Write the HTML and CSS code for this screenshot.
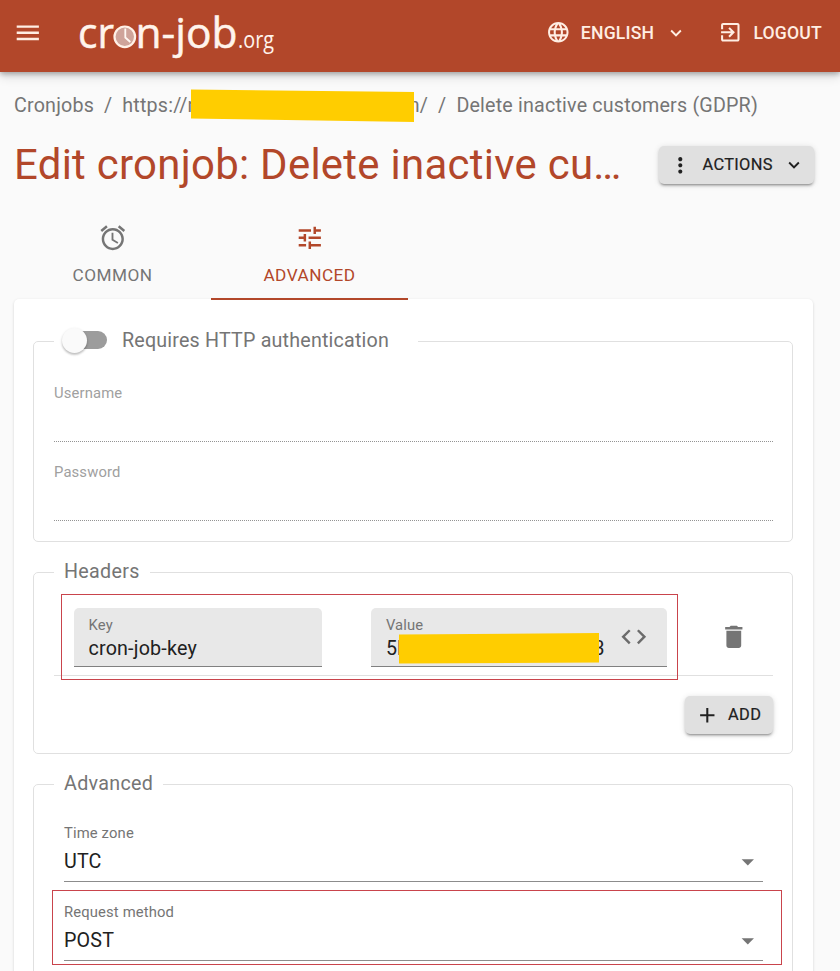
FILE: index.html
```
<!DOCTYPE html>
<html lang="en">
<head>
<meta charset="utf-8">
<title>Edit cronjob</title>
<link rel="stylesheet" href="styles.css">
</head>
<body>
<header class="appbar">
  <svg class="icon menu" viewBox="0 0 24 24"><path d="M3 18h18v-2H3v2zm0-5h18v-2H3v2zm0-7v2h18V6H3z"/></svg>
  <svg class="logo" viewBox="0 0 200 72" role="img" aria-label="cron-job.org">
    <g class="logo-text">
      <text x="1" y="47.5" textLength="36" lengthAdjust="spacingAndGlyphs">cr</text>
      <text x="58.5" y="47.5" textLength="102" lengthAdjust="spacingAndGlyphs">n-job</text>
      <text class="logo-tld" x="161" y="48" textLength="36" lengthAdjust="spacingAndGlyphs">.org</text>
    </g>
    <circle class="clock-face" cx="47.8" cy="36.8" r="10.3"/>
    <path class="clock-hands" d="M48.3 28.5v9l5 4.5"/>
  </svg>
  <div class="appbar-action language">
    <svg class="icon small" viewBox="0 0 24 24"><path d="M11.99 2C6.47 2 2 6.48 2 12s4.47 10 9.99 10C17.52 22 22 17.52 22 12S17.52 2 11.99 2zm6.93 6h-2.95c-.32-1.25-.78-2.45-1.38-3.56 1.84.63 3.37 1.91 4.33 3.56zM12 4.04c.83 1.2 1.48 2.53 1.91 3.96h-3.82c.43-1.43 1.08-2.76 1.91-3.96zM4.26 14C4.1 13.36 4 12.69 4 12s.1-1.36.26-2h3.38c-.08.66-.14 1.32-.14 2s.06 1.34.14 2H4.26zm.82 2h2.95c.32 1.25.78 2.45 1.38 3.56-1.84-.63-3.37-1.9-4.33-3.56zm2.95-8H5.08c.96-1.66 2.49-2.93 4.33-3.56C8.81 5.55 8.35 6.75 8.03 8zM12 19.96c-.83-1.2-1.48-2.53-1.91-3.96h3.82c-.43 1.43-1.08 2.76-1.91 3.96zM14.34 14H9.66c-.09-.66-.16-1.32-.16-2s.07-1.35.16-2h4.68c.09.65.16 1.32.16 2s-.07 1.34-.16 2zm.25 5.56c.6-1.11 1.06-2.31 1.38-3.56h2.95c-.96 1.65-2.49 2.93-4.33 3.56zM16.36 14c.08-.66.14-1.32.14-2s-.06-1.34-.14-2h3.38c.16.64.26 1.31.26 2s-.1 1.36-.26 2h-3.38z"/></svg>
    <span>ENGLISH</span>
    <svg class="icon caret" viewBox="0 0 24 24"><path d="M7.41 8.59 12 13.17l4.59-4.58L18 10l-6 6-6-6z"/></svg>
  </div>
  <div class="appbar-action">
    <svg class="icon small" viewBox="0 0 24 24"><path d="M10.09 15.59 11.5 17l5-5-5-5-1.41 1.41L12.67 11H3v2h9.67l-2.58 2.59zM19 3H5c-1.11 0-2 .9-2 2v4h2V5h14v14H5v-4H3v4c0 1.1.89 2 2 2h14c1.1 0 2-.9 2-2V5c0-1.1-.9-2-2-2z"/></svg>
    <span>LOGOUT</span>
  </div>
</header>

<main class="content">
  <nav class="breadcrumbs">
    <span>Cronjobs</span><span class="sep">/</span>
    <span class="url"><span>https://n</span><svg class="redaction" viewBox="0 0 223 33"><path d="M0 0.5 223 3v30L0 29.5z"/></svg><span>n/</span></span>
    <span class="sep">/</span><span>Delete inactive customers (GDPR)</span>
  </nav>

  <div class="title-row">
    <h1>Edit cronjob: Delete inactive cu…</h1>
    <button class="btn actions">
      <svg class="icon small" viewBox="0 0 24 24"><path d="M12 8c1.1 0 2-.9 2-2s-.9-2-2-2-2 .9-2 2 .9 2 2 2zm0 2c-1.1 0-2 .9-2 2s.9 2 2 2 2-.9 2-2-.9-2-2-2zm0 6c-1.1 0-2 .9-2 2s.9 2 2 2 2-.9 2-2-.9-2-2-2z"/></svg>
      <span>ACTIONS</span>
      <svg class="icon caret" viewBox="0 0 24 24"><path d="M7.41 8.59 12 13.17l4.59-4.58L18 10l-6 6-6-6z"/></svg>
    </button>
  </div>

  <div class="tabs">
    <div class="tab">
      <svg class="icon" viewBox="0 0 24 24"><path d="m22 5.72-4.6-3.86-1.29 1.53 4.6 3.86L22 5.72zM7.88 3.39 6.6 1.86 2 5.71l1.29 1.53 4.59-3.85zM12.5 8H11v6l4.75 2.85.75-1.23-4-2.37V8zM12 4c-4.97 0-9 4.03-9 9s4.02 9 9 9c4.97 0 9-4.03 9-9s-4.03-9-9-9zm0 16c-3.87 0-7-3.13-7-7s3.13-7 7-7 7 3.13 7 7-3.13 7-7 7z"/></svg>
      <span>COMMON</span>
    </div>
    <div class="tab selected">
      <svg class="icon" viewBox="0 0 24 24"><path d="M3 17v2h6v-2H3zM3 5v2h10V5H3zm10 16v-2h8v-2h-8v-2h-2v6h2zM7 9v2H3v2h4v2h2V9H7zm14 4v-2H11v2h10zm-6-4h2V7h4V5h-4V3h-2v6z"/></svg>
      <span>ADVANCED</span>
    </div>
  </div>

  <section class="card">
    <fieldset class="auth">
      <legend><span class="switch"><span class="thumb"></span></span>Requires HTTP authentication</legend>
      <div class="field disabled"><label>Username</label></div>
      <div class="field disabled"><label>Password</label></div>
    </fieldset>

    <fieldset class="headers">
      <legend>Headers</legend>
      <div class="header-row">
        <div class="filled key"><label>Key</label><span class="value">cron-job-key</span></div>
        <div class="filled val">
          <div><label>Value</label>
            <span class="value secret"><span>5b</span><svg class="redaction" viewBox="0 0 200 31"><path d="M0 1.5 200 0v29.5L0 30.5z"/></svg><span>3</span></span>
          </div>
          <svg class="icon code" viewBox="0 0 24 24"><path d="M9.4 16.6 4.8 12l4.6-4.6L8 6l-6 6 6 6 1.4-1.4zm5.2 0 4.6-4.6-4.6-4.6L16 6l6 6-6 6-1.4-1.4z"/></svg>
        </div>
        <svg class="icon trash" viewBox="0 0 24 24"><path d="M6 19c0 1.1.9 2 2 2h8c1.1 0 2-.9 2-2V7H6v12zM19 4h-3.5l-1-1h-5l-1 1H5v2h14V4z"/></svg>
        <div class="highlight row-highlight"></div>
      </div>
      <button class="btn add">
        <svg class="icon small" viewBox="0 0 24 24"><path d="M19 13h-6v6h-2v-6H5v-2h6V5h2v6h6v2z"/></svg>
        <span>ADD</span>
      </button>
    </fieldset>

    <fieldset class="advanced">
      <legend>Advanced</legend>
      <div class="field">
        <label>Time zone</label>
        <div class="select"><span>UTC</span><svg class="icon" viewBox="0 0 24 24"><path d="m7 10 5 5 5-5z"/></svg></div>
      </div>
      <div class="field">
        <label>Request method</label>
        <div class="select"><span>POST</span><svg class="icon" viewBox="0 0 24 24"><path d="m7 10 5 5 5-5z"/></svg></div>
        <div class="highlight method-highlight"></div>
      </div>
    </fieldset>
  </section>
</main>
</body>
</html>
```
FILE: styles.css
```
* { box-sizing: border-box; }
body {
  margin: 0;
  height: 971px;
  overflow: hidden;
  background: #fafafa;
  color: #212121;
  font: 400 19.7px/30px Roboto, sans-serif;
  letter-spacing: 0.185px;
}
svg { display: block; flex: none; }
.icon { width: 29.6px; height: 29.6px; fill: currentColor; }
.icon.small { width: 24.6px; height: 24.6px; }
.icon.caret { width: 22px; height: 22px; }

.appbar {
  position: relative;
  display: flex;
  align-items: center;
  height: 72px;
  padding: 0 18px 0 13px;
  background: #b2472a;
  color: #ffeee3;
  box-shadow: 0 2px 5px rgba(0,0,0,.28), 0 5px 10px rgba(0,0,0,.12);
}
.menu { margin-top: -7px; }
.logo { width: 200px; height: 72px; margin-left: 34px; margin-right: auto; overflow: visible; }
.logo-text { font-family: "Open Sans", "Noto Sans", sans-serif; font-size: 42px; letter-spacing: 0; fill: #fff4ec; stroke: #fff4ec; stroke-width: .5; }
.logo-tld { font-size: 23px; stroke-width: 0; }
.clock-face { fill: #cfa49a; stroke: #fff0e6; stroke-width: 2.2; }
.clock-hands { fill: none; stroke: #fff8f2; stroke-width: 1.8; }
.appbar-action {
  display: flex;
  align-items: center;
  height: 30px;
  margin-top: -7px;
  font-size: 17.6px;
  font-weight: 500;
  letter-spacing: 0.2px;
}
.appbar-action .small { margin-right: 10.5px; }
.language { margin-right: 31px; }
.language .caret { margin-left: 11px; }

.content { padding: 0 27px 0 14px; }
.breadcrumbs { display: flex; margin-top: 19px; color: #757575; white-space: nowrap; }
.breadcrumbs .sep { margin: 0 10px; }
.url { display: flex; }
.url .redaction { margin: -2px -5px 0 -8px; }
.redaction { position: relative; fill: #ffcd00; }
.breadcrumbs .redaction { width: 223px; height: 33px; }

.title-row { display: flex; align-items: center; justify-content: space-between; height: 52px; margin-top: 17px; }
h1 {
  margin: 0;
  white-space: nowrap;
  font-size: 41.9px;
  font-weight: 400;
  line-height: 52px;
  letter-spacing: 0.29px;
  color: #b2472a;
}
.btn {
  display: flex;
  align-items: center;
  height: 38px;
  padding: 0;
  border: 0;
  border-radius: 5px;
  background: #e0e0e0;
  color: #212121;
  font: 400 16.4px/30px Roboto, sans-serif;
  letter-spacing: 0.3px;
  box-shadow: 0 3px 2px -2px rgba(0,0,0,.25), 0 2px 3px rgba(0,0,0,.16), 0 1px 6px rgba(0,0,0,.12);
}
.btn span { -webkit-text-stroke: .2px currentColor; }
.actions { width: 155px; margin-right: -1px; padding-left: 9px; }
.actions .small { margin-right: 10px; }
.actions .caret { margin-left: 10px; }

.tabs { display: flex; height: 89px; margin-top: 20px; }
.tab {
  display: flex;
  flex-direction: column;
  align-items: center;
  width: 197px;
  height: 89px;
  padding-top: 12px;
  color: #757575;
  font-size: 17.2px;
  letter-spacing: 0.49px;
}
.tab span { margin-top: 7.5px; }
.tab.selected { position: relative; color: #b2472a; border-bottom: 2.5px solid #b2472a; }

.card {
  height: 680px;
  overflow: hidden;
  margin-top: -1px;
  padding: 27px 20px 0 19px;
  background: #fff;
  border-radius: 5px 5px 0 0;
  box-shadow: 0 1px 3px rgba(0,0,0,.16);
}
fieldset {
  min-width: 0;
  margin: 0 0 15px;
  padding: 27px 19px 0 20px;
  border: 1px solid #e0e0e0;
  border-radius: 5px;
}
legend { display: flex; align-items: center; height: 30px; padding: 0 10px; color: #757575; letter-spacing: 0.3px; }
.auth { height: 216px; }
.auth legend { padding: 0 29px 0 11px; letter-spacing: 0.185px; }
.headers { height: 197px; padding-top: 12px; }
.advanced { height: 300px; padding: 24px 29px 0 30px; }
.advanced legend { margin-left: -10px; }
.switch { width: 42px; height: 18px; margin: -2px 15px 0 0; border-radius: 9px; background: #9c9c9c; }
.thumb {
  display: block;
  width: 25px;
  height: 25px;
  margin: -3px 0 0 -3px;
  border-radius: 50%;
  background: #fafafa;
  box-shadow: 0 2px 2px rgba(0,0,0,.16), 0 1px 3px rgba(0,0,0,.14);
}
label { display: block; font-size: 14.8px; line-height: 20px; letter-spacing: 0.14px; color: #757575; }
.field { position: relative; height: 59px; margin-bottom: 20px; border-bottom: 1px solid #8c8c8c; }
.field.disabled { border-bottom: 1px dotted #949494; }
.disabled label { color: #a0a0a0; }
.select { display: flex; align-items: center; justify-content: space-between; height: 30px; margin-top: 4px; }
.select .icon { color: #757575; }

.header-row {
  position: relative;
  display: flex;
  align-items: flex-start;
  height: 77px;
  padding: 9px 0 0 20px;
  border-bottom: 1px solid #e0e0e0;
}
.filled {
  height: 59px;
  padding: 7px 15px 0 14.5px;
  border-bottom: 1px solid #808080;
  border-radius: 5px 5px 0 0;
  background: #e8e8e8;
}
.key { width: 248px; }
.val { display: flex; width: 296px; margin-left: 49.4px; }
.value { display: block; height: 28px; line-height: 28px; }
.secret { display: flex; }
.secret .redaction { width: 200px; height: 31px; margin: -2px -6px 0 -9px; }
.code { margin: 7px 0 0 14px; color: #6b6b6b; }
.trash { margin: 14px 0 0 51.5px; color: #757575; }
.add { width: 88px; margin: 20px 0 0 auto; padding-left: 9.5px; }
.add .small { margin-right: 9px; }
.highlight { position: absolute; border: 1px solid #c9444c; }
.row-highlight { left: 7px; top: -5px; width: 617px; height: 86px; }
.method-highlight { left: -12px; top: -12px; width: 730px; height: 75px; }
```
